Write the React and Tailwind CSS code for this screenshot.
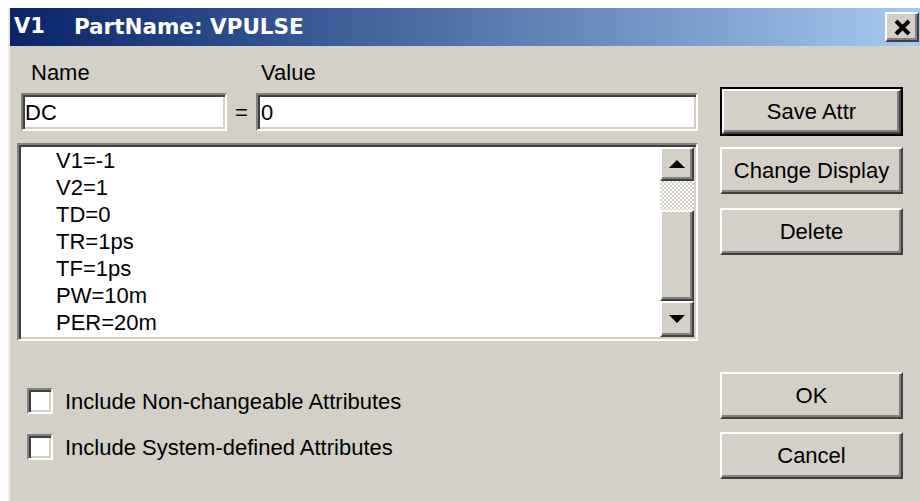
import React from 'react';

// Win2000-style bevels
const raised =
  'bg-[#d4d0c8] border-2 border-t-white border-l-white border-r-[#404040] border-b-[#404040] shadow-[inset_-2px_-2px_0_#808080]';
const sunken =
  'bg-white border-2 border-t-[#808080] border-l-[#808080] border-r-white border-b-white shadow-[inset_2px_2px_0_#404040,inset_-2px_-2px_0_#d4d0c8]';

const attrs = ['V1=-1', 'V2=1', 'TD=0', 'TR=1ps', 'TF=1ps', 'PW=10m', 'PER=20m'];

function Button({ label, isDefault, className }) {
  const face = (
    <div className={`${raised} h-full flex items-center justify-center text-[22px] text-black`}>
      {label}
    </div>
  );
  if (isDefault) {
    return <div className={`border-2 border-black ${className}`}>{face}</div>;
  }
  return <div className={className}>{face}</div>;
}

function Arrow({ down }) {
  return (
    <svg width="16" height="8" viewBox="0 0 16 8">
      {down ? <polygon points="0,0 16,0 8,8" fill="#000" /> : <polygon points="8,0 16,8 0,8" fill="#000" />}
    </svg>
  );
}

function Checkbox({ label, className }) {
  return (
    <div className={`h-[26px] flex items-center ${className}`}>
      <div className={`${sunken} ml-[10px] w-[26px] h-[26px]`} />
      <span className="ml-[12px] text-[22px]">{label}</span>
    </div>
  );
}

export default function App() {
  return (
    <div className="w-[920px] h-[501px] overflow-hidden bg-white pt-2 pl-2 font-['Liberation_Sans',Arial,sans-serif] text-black">
      <div className="h-full flex flex-col bg-[#d4d0c8] border-l-2 border-l-[#ece9e4]">
        {/* title bar */}
        <div className="h-[38px] shrink-0 flex items-center bg-linear-to-r from-[#0a246a] to-[#a6caf0] pl-1 pr-px">
          <span className="font-['DejaVu_Sans',Verdana,sans-serif] font-bold text-[21px] text-white">V1</span>
          <span className="ml-[29px] font-['DejaVu_Sans',Verdana,sans-serif] font-bold text-[21.5px] text-white">
            PartName: VPULSE
          </span>
          <div className={`${raised} ml-auto w-[34px] h-[30px] flex items-center justify-center`}>
            <svg width="17" height="17" viewBox="0 0 17 17">
              <path d="M2 2 L15 15 M15 2 L2 15" stroke="#000" strokeWidth="4" />
            </svg>
          </div>
        </div>

        <div className="flex flex-1">
          {/* left column */}
          <div className="ml-[7px] w-[681px] flex flex-col">
            <div className="mt-3 h-[28px] flex items-center text-[22px]">
              <span className="w-[244px] pl-[14px]">Name</span>
              <span>Value</span>
            </div>
            <div className="mt-[7px] h-[38px] flex pl-[4px]">
              <div className={`${sunken} w-[206px] h-full flex items-center pl-[2px] text-[22px]`}>DC</div>
              <div className="w-[29px] flex items-center justify-center text-[22px]">=</div>
              <div className={`${sunken} w-[442px] h-full flex items-center pl-[3px] text-[22px]`}>0</div>
            </div>

            <div className={`${sunken} mt-[12px] h-[198px] p-[2px] flex`}>
              <div className="flex-1 pl-[35px]">
                {attrs.map((a) => (
                  <div key={a} className="h-[27px] leading-[27px] text-[22px]">
                    {a}
                  </div>
                ))}
              </div>
              <div className="w-[34px] flex flex-col">
                <div className={`${raised} h-[34px] flex items-center justify-center`}>
                  <Arrow />
                </div>
                <div className="h-[29px] bg-[repeating-conic-gradient(#d4d0c8_0%_25%,#ffffff_0%_50%)] bg-[length:4px_4px]" />
                <div className={`${raised} h-[91px]`} />
                <div className={`${raised} h-[36px] flex items-center justify-center`}>
                  <Arrow down />
                </div>
              </div>
            </div>

            <Checkbox className="mt-[47px]" label="Include Non-changeable Attributes" />
            <Checkbox className="mt-[20px]" label="Include System-defined Attributes" />
          </div>

          {/* right column */}
          <div className="ml-[22px] w-[183px] flex flex-col">
            <Button isDefault className="mt-[41px] h-[49px]" label="Save Attr" />
            <Button className="mt-[11px] h-[47px]" label="Change Display" />
            <Button className="mt-[14px] h-[47px]" label="Delete" />
            <Button className="mt-[117px] h-[47px]" label="OK" />
            <Button className="mt-[13px] h-[47px]" label="Cancel" />
          </div>
        </div>
      </div>
    </div>
  );
}
